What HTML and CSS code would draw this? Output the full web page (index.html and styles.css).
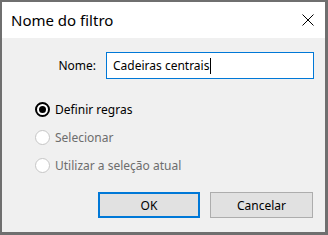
FILE: index.html
```html
<!DOCTYPE html>
<html lang="pt">
<head>
<meta charset="utf-8">
<title>Nome do filtro</title>
<link rel="stylesheet" href="styles.css">
</head>
<body>
<div class="window">
  <div class="titlebar">
    <span class="title">Nome do filtro</span>
    <span class="close">
      <svg width="12" height="12" viewBox="0 0 12 12"><path d="M0.5 0.5 L11.5 11.5 M11.5 0.5 L0.5 11.5" stroke="#000" stroke-width="1" fill="none"/></svg>
    </span>
  </div>
  <div class="content">
    <div class="field">
      <label class="fieldLabel">Nome:</label>
      <div class="textbox">Cadeiras centrais<span class="caret"></span></div>
    </div>
    <div class="options">
      <div class="option"><span class="radio checked"></span><span class="optionText">Definir regras</span></div>
      <div class="option disabled"><span class="radio"></span><span class="optionText">Selecionar</span></div>
      <div class="option disabled"><span class="radio"></span><span class="optionText">Utilizar a seleção atual</span></div>
    </div>
    <div class="buttons">
      <div class="button default">OK</div>
      <div class="button">Cancelar</div>
    </div>
  </div>
</div>
</body>
</html>
```
FILE: styles.css
```css
html, body {
  margin: 0;
  padding: 0;
}
body {
  font-family: "Noto Sans", "Open Sans", sans-serif;
  font-size: 12px;
  color: #000;
}
.window {
  box-sizing: border-box;
  width: 328px;
  height: 235px;
  border-style: solid;
  border-color: #6f6f6f;
  border-width: 2px 3px 3px 2px;
  background: #f0f0f0;
  display: flex;
  flex-direction: column;
}
.titlebar {
  height: 36px;
  background: #fff;
  display: flex;
  align-items: center;
  justify-content: space-between;
  padding: 0 11px 0 9px;
}
.title {
  font-size: 15px;
  color: #000;
  margin-top: -1px;
}
.close {
  display: flex;
  width: 12px;
  height: 12px;
}
.content {
  flex: 1;
  display: flex;
  flex-direction: column;
  padding: 14px 0 0 0;
}
.field {
  display: flex;
  align-items: center;
  padding-right: 11px;
}
.fieldLabel {
  flex: 1;
  text-align: right;
  margin-right: 10px;
}
.textbox {
  box-sizing: border-box;
  width: 208px;
  height: 27px;
  border: 1px solid #0078d7;
  background: #fff;
  padding: 0 6px;
  display: flex;
  align-items: center;
  white-space: nowrap;
}
.caret {
  display: inline-block;
  width: 1px;
  height: 16px;
  background: #000;
  margin-left: 1px;
}
.options {
  margin-top: 16px;
  padding-left: 33px;
  display: flex;
  flex-direction: column;
}
.option {
  height: 28px;
  display: flex;
  align-items: center;
}
.radio {
  box-sizing: border-box;
  width: 15px;
  height: 15px;
  border-radius: 50%;
  border: 1px solid #c6c6c6;
  background: #fff;
  margin-right: 5px;
  position: relative;
}
.radio.checked {
  border: 2px solid #000;
}
.radio.checked::after {
  content: "";
  position: absolute;
  left: 2px;
  top: 2px;
  width: 7px;
  height: 7px;
  border-radius: 50%;
  background: #000;
}
.option.disabled .optionText {
  color: #6d6d6d;
}
.buttons {
  margin-top: 13px;
  display: flex;
  justify-content: flex-end;
  gap: 10px;
  padding-right: 12px;
}
.button {
  box-sizing: border-box;
  width: 103px;
  height: 26px;
  background: #e1e1e1;
  border: 1px solid #adadad;
  display: flex;
  align-items: center;
  justify-content: center;
}
.button.default {
  width: 102px;
  border: 2px solid #0078d7;
}
```
